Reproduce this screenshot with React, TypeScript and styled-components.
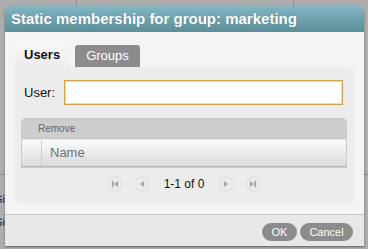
import styled, { createGlobalStyle } from "styled-components";

const GlobalStyle = createGlobalStyle`
  html, body {
    margin: 0;
    padding: 0;
    background: #adadad;
    font-family: "Liberation Sans", Arial, sans-serif;
  }
`;

const Page = styled.div`
  position: relative;
  width: 368px;
  height: 249px;
  overflow: hidden;
  background: #adadad;
`;

/* the page behind the modal overlay */
const Backdrop = styled.div`
  display: flex;
  flex-direction: column;
  height: 100%;
`;

const BgRow = styled.div<{ h: number }>`
  display: grid;
  grid-template-columns: 77px 217px 1fr;
  height: ${(p) => p.h}px;
  border-bottom: 1px solid #8a8a8a;
  flex-shrink: 0;
`;

const BgCell = styled.div<{ line?: boolean }>`
  border-right: ${(p) => (p.line ? "1px solid #8a8a8a" : "none")};
  display: flex;
  flex-direction: column;
  overflow: hidden;
`;

const BgText = styled.span<{ top: number }>`
  margin-top: ${(p) => p.top}px;
  margin-left: -6px;
  font-size: 11px;
  line-height: 12px;
  color: #241d4f;
`;

const Dialog = styled.div`
  position: absolute;
  left: 5px;
  top: 6px;
  width: 359px;
  height: 240px;
  display: flex;
  flex-direction: column;
  border-radius: 5px 5px 0 0;
  box-shadow: 0 1px 2px rgba(0, 0, 0, 0.45);
  overflow: hidden;
  background: #f4f4f4;
`;

const TitleBar = styled.div`
  height: 26px;
  flex-shrink: 0;
  background: linear-gradient(#82b5c1, #5c8e99);
  color: #fff;
  font-weight: bold;
  font-size: 15px;
  line-height: 26px;
  padding: 0 0 0 6px;
  box-sizing: border-box;
  text-shadow: 0 0 1px rgba(40, 80, 90, 0.5);
  white-space: nowrap;
`;

const Body = styled.div`
  flex: 1;
  padding: 11px 10px 11px 10px;
  background: #f4f4f4;
  display: flex;
  flex-direction: column;
`;

const TabStrip = styled.div`
  display: flex;
  align-items: flex-end;
  height: 24px;
  gap: 6px;
`;

const Tab = styled.div<{ active?: boolean }>`
  height: ${(p) => (p.active ? 24 : 22)}px;
  line-height: ${(p) => (p.active ? 24 : 22)}px;
  padding: 0 ${(p) => (p.active ? 9 : 11)}px;
  font-size: 13px;
  font-weight: ${(p) => (p.active ? "bold" : "normal")};
  color: ${(p) => (p.active ? "#111" : "#fff")};
  background: ${(p) =>
    p.active ? "linear-gradient(#f8f8f8, #ececec)" : "#8c8c8c"};
  border-radius: 3px 3px 0 0;
`;

const Panel = styled.div`
  background: #ececec;
  border-radius: 0 4px 4px 4px;
  padding: 13px 7px 10px 6px;
  display: flex;
  flex-direction: column;
`;

const FormRow = styled.div`
  display: flex;
  align-items: center;
  gap: 9px;
  padding: 0 4px 0 3px;
`;

const Label = styled.label`
  font-size: 13px;
  color: #111;
`;

const Input = styled.input`
  flex: 1;
  height: 25px;
  box-sizing: border-box;
  border: 1px solid #d3a24a;
  box-shadow: inset 0 0 0 1px #f1dcb0;
  background: #fff;
  outline: none;
`;

const Table = styled.div`
  margin-top: 13px;
  border: 1px solid #c9c9c9;
  border-radius: 4px 4px 0 0;
  overflow: hidden;
`;

const TableCaption = styled.div`
  height: 20px;
  line-height: 19px;
  background: #cdcdcd;
  font-size: 10px;
  color: #666;
  padding-left: 16px;
`;

const HeaderRow = styled.div`
  display: flex;
  height: 26px;
  background: linear-gradient(#fbfbfb, #dadada);
  border-top: 1px solid #e6e6e6;
  border-bottom: 1px solid #b9b9b9;
`;

const HeaderCell = styled.div<{ w?: number }>`
  ${(p) => (p.w ? `width: ${p.w}px; flex-shrink: 0;` : "flex: 1;")}
  border-right: ${(p) => (p.w ? "1px solid #cfcfcf" : "none")};
  font-size: 13px;
  line-height: 26px;
  color: #707070;
  padding-left: ${(p) => (p.w ? 0 : 8)}px;
`;

const Pager = styled.div`
  margin-top: 7px;
  height: 18px;
  display: flex;
  align-items: center;
  justify-content: center;
  gap: 11px;
`;

const PageButton = styled.div`
  width: 16px;
  height: 16px;
  border-radius: 50%;
  background: #e9e9e9;
  border: 1px solid #e2e2e2;
  box-sizing: border-box;
  display: flex;
  align-items: center;
  justify-content: center;
`;

const PageInfo = styled.span`
  font-size: 12px;
  color: #111;
  margin: 0 3px;
`;

const Footer = styled.div`
  height: 34px;
  flex-shrink: 0;
  border-top: 1px solid #c6c6c6;
  background: #e8e8e8;
  display: flex;
  align-items: center;
  justify-content: flex-end;
  gap: 3px;
  padding-right: 11px;
`;

const Button = styled.button<{ w: number }>`
  width: ${(p) => p.w}px;
  height: 18px;
  border: none;
  border-radius: 9px;
  background: #8c8c8c;
  color: #fff;
  font-family: "Liberation Sans", Arial, sans-serif;
  font-size: 11px;
  padding: 0;
`;

const Glyph = ({ kind }: { kind: "first" | "prev" | "next" | "last" }) => {
  const c = "#a3a3a3";
  return (
    <svg width="8" height="8" viewBox="0 0 8 8">
      {kind === "first" && (
        <>
          <rect x="1" y="1" width="1.6" height="6" fill={c} />
          <polygon points="7,1 7,7 3,4" fill={c} />
        </>
      )}
      {kind === "prev" && <polygon points="6,1 6,7 2,4" fill={c} />}
      {kind === "next" && <polygon points="2,1 2,7 6,4" fill={c} />}
      {kind === "last" && (
        <>
          <polygon points="1,1 1,7 5,4" fill={c} />
          <rect x="5.4" y="1" width="1.6" height="6" fill={c} />
        </>
      )}
    </svg>
  );
};

export default function App() {
  return (
    <Page>
      <GlobalStyle />
      <Backdrop>
        <BgRow h={174}>
          <BgCell line>
            <BgText top={5}>e</BgText>
            <BgText top={48}>r</BgText>
          </BgCell>
          <BgCell line />
          <BgCell />
        </BgRow>
        <BgRow h={75}>
          <BgCell>
            <BgText top={18}>Gi</BgText>
            <BgText top={11}>Gi</BgText>
          </BgCell>
          <BgCell />
          <BgCell />
        </BgRow>
      </Backdrop>

      <Dialog>
        <TitleBar>Static membership for group: marketing</TitleBar>
        <Body>
          <TabStrip>
            <Tab active>Users</Tab>
            <Tab>Groups</Tab>
          </TabStrip>
          <Panel>
            <FormRow>
              <Label>User:</Label>
              <Input />
            </FormRow>
            <Table>
              <TableCaption>Remove</TableCaption>
              <HeaderRow>
                <HeaderCell w={19} />
                <HeaderCell>Name</HeaderCell>
              </HeaderRow>
            </Table>
            <Pager>
              <PageButton>
                <Glyph kind="first" />
              </PageButton>
              <PageButton>
                <Glyph kind="prev" />
              </PageButton>
              <PageInfo>1-1 of 0</PageInfo>
              <PageButton>
                <Glyph kind="next" />
              </PageButton>
              <PageButton>
                <Glyph kind="last" />
              </PageButton>
            </Pager>
          </Panel>
        </Body>
        <Footer>
          <Button w={35}>OK</Button>
          <Button w={53}>Cancel</Button>
        </Footer>
      </Dialog>
    </Page>
  );
}
